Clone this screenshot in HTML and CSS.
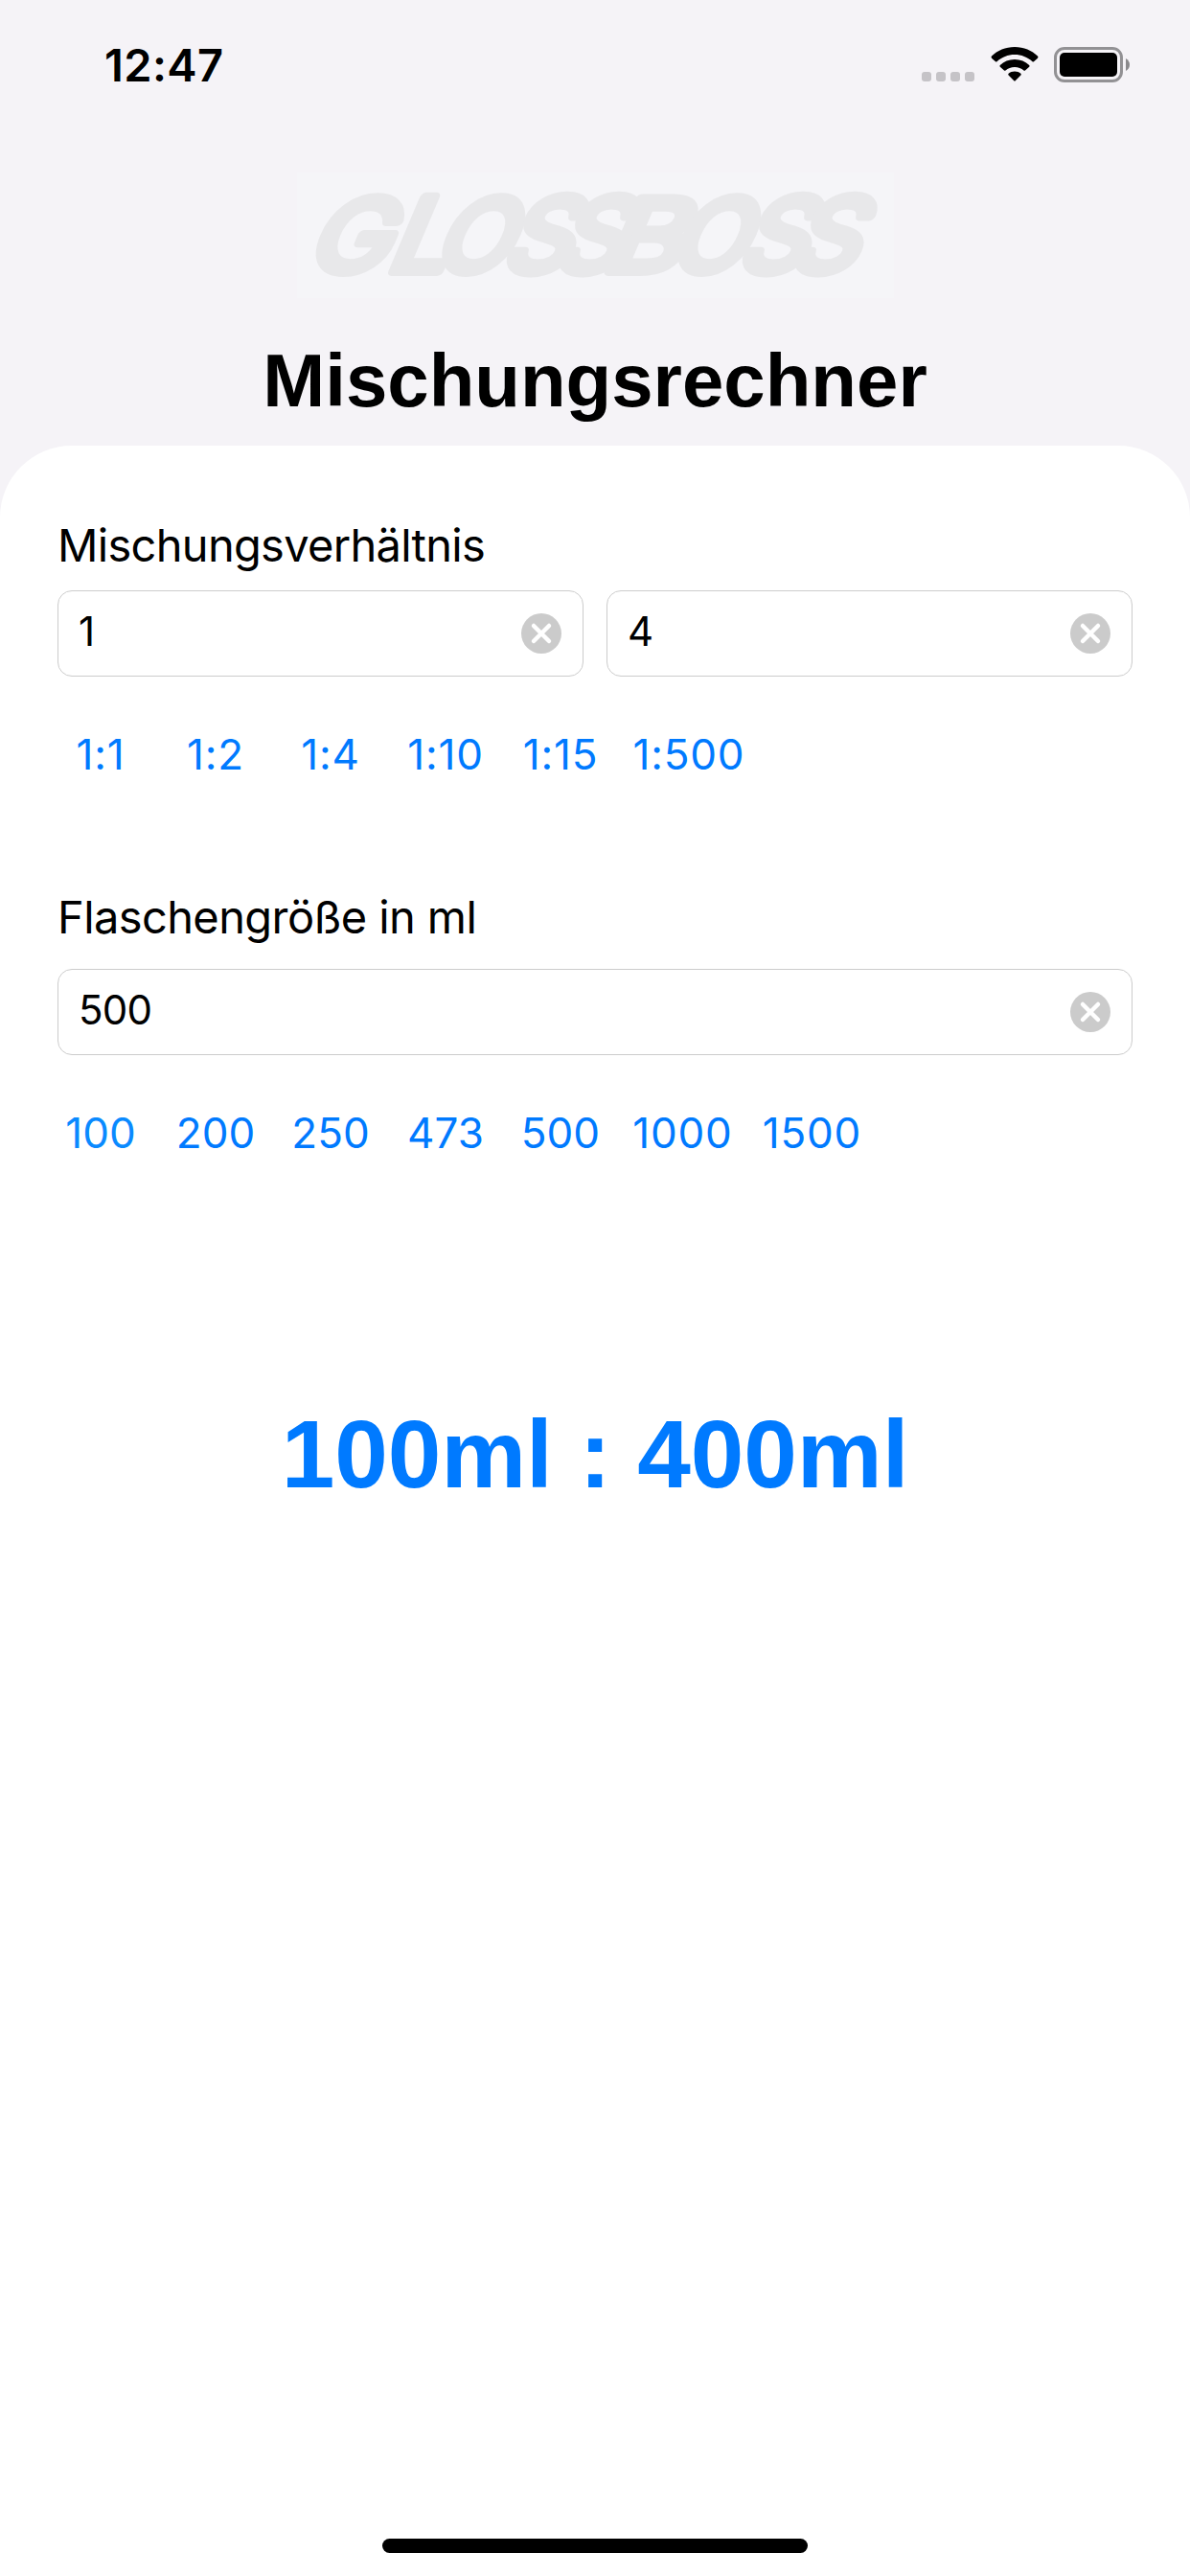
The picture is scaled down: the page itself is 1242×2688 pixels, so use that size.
FILE: index.html
```html
<!DOCTYPE html>
<html lang="de">
<head>
<meta charset="utf-8">
<title>Mischungsrechner</title>
<link rel="stylesheet" href="styles.css">
</head>
<body>
<header class="header">
  <div class="statusbar">
    <time class="clock">12:47</time>
    <div class="status-icons">
      <svg class="dots" viewBox="0 0 55 10"><rect width="10" height="10" rx="3"/><rect x="15" width="10" height="10" rx="3"/><rect x="30" width="10" height="10" rx="3"/><rect x="45" width="10" height="10" rx="3"/></svg>
      <svg class="wifi" viewBox="0 0 50 36"><path d="M25 0C34.600 0 43 3.700 49 9.500Q50 10.600 49 11.700L45 15.300Q44.300 15.900 43.500 15.200C38.500 10.700 32 8 25 8S11.500 10.700 6.500 15.200Q5.700 15.900 5 15.300L1 11.700Q0 10.600 1 9.500C7 3.700 15.400 0 25 0Z"/><path d="M25 13C31 13 36.300 15.200 40.200 18.900Q41 19.800 40.200 20.700L36 24.500Q35.300 25.200 34.500 24.500C32 22.300 28.700 21 25 21S18 22.300 15.500 24.500Q14.700 25.200 14 24.500L9.800 20.700Q9 19.800 9.800 18.900C13.700 15.200 19 13 25 13Z"/><path d="M25 25.500C27.500 25.500 29.700 26.300 31.400 27.700Q32.300 28.600 31.400 29.500L25.700 35.300Q25 36 24.300 35.300L18.600 29.500Q17.700 28.600 18.600 27.700C20.300 26.300 22.500 25.500 25 25.500Z"/></svg>
      <svg class="battery" viewBox="0 0 80 37"><rect x="1.500" y="1.500" width="69" height="34" rx="9.500" fill="none" stroke="#929194" stroke-width="3"/><rect x="6" y="6" width="60" height="25" rx="5"/><path d="M75 12Q79 14.500 79 18.500T75 25Z" fill="#8a898c"/></svg>
    </div>
  </div>
  <svg class="logo" viewBox="0 0 623 131" role="img" aria-label="Glossboss">
    <g transform="translate(0 103) skewX(-23)">
      <text transform="translate(7 0) scale(1.13 1.04)">G</text>
      <text transform="translate(91 0) scale(1.1 1.06)">L</text>
      <text transform="translate(139 0) scale(1.04 1.04)">O</text>
      <text transform="translate(211 0) scale(1.1 1.06)">S</text>
      <text transform="translate(265 0) scale(1.1 1.06)">S</text>
      <text transform="translate(316 0) scale(1.25 1.04)">B</text>
      <text transform="translate(385 0) scale(1.04 1.04)">O</text>
      <text transform="translate(457 0) scale(1.1 1.06)">S</text>
      <text transform="translate(511 0) scale(1.1 1.06)">S</text>
    </g>
  </svg>
  <h1 class="title">Mischungsrechner</h1>
</header>
<main class="card">
  <h2 class="label">Mischungsverhältnis</h2>
  <div class="fields">
    <div class="field"><span>1</span><svg class="clear" viewBox="0 0 42 42"><circle cx="21" cy="21" r="21"/><path d="M13 13L29 29M29 13L13 29"/></svg></div>
    <div class="field"><span>4</span><svg class="clear" viewBox="0 0 42 42"><circle cx="21" cy="21" r="21"/><path d="M13 13L29 29M29 13L13 29"/></svg></div>
  </div>
  <div class="presets ratios"><a>1:1</a><a>1:2</a><a>1:4</a><a>1:10</a><a>1:15</a><a class="wide">1:500</a></div>
  <h2 class="label size-label">Flaschengröße in ml</h2>
  <div class="fields size-fields">
    <div class="field"><span>500</span><svg class="clear" viewBox="0 0 42 42"><circle cx="21" cy="21" r="21"/><path d="M13 13L29 29M29 13L13 29"/></svg></div>
  </div>
  <div class="presets sizes"><a class="pressed">100</a><a>200</a><a>250</a><a>473</a><a>500</a><a class="wide">1000</a><a class="wide">1500</a></div>
  <p class="result">100ml : 400ml</p>
</main>
<div class="home-indicator"></div>
</body>
</html>
```
FILE: styles.css
```css
* { box-sizing: border-box; }
body { margin: 0; height: 2688px; display: flex; flex-direction: column; background: #f5f3f7; color: #000; font-family: Inter, "Liberation Sans", sans-serif; overflow: hidden; }
.header { height: 465px; display: flex; flex-direction: column; align-items: center; }
.statusbar { width: 100%; height: 180px; display: flex; justify-content: space-between; padding: 0 62px 0 109px; }
.clock { margin-top: 38px; height: 60px; font-size: 47px; line-height: 60px; font-weight: 600; letter-spacing: 0.4px; }
.status-icons { display: flex; height: 37px; margin-top: 49px; }
.dots { width: 55px; height: 10px; margin: 26px 17px 0 0; fill: #c5c3c7; }
.wifi { width: 50px; height: 36px; margin-right: 16px; }
.battery { width: 80px; height: 37px; }
.logo { width: 623px; height: 131px; background: #f5f5f8; overflow: visible; }
.logo text { font: 400 100px Inter, sans-serif; fill: #e8e8ea; stroke: #e8e8ea; stroke-width: 9.5px; stroke-linejoin: round; }
.title { margin: 41px 0 0; height: 90px; font: bold 78px/90px "Liberation Sans", Arial, sans-serif; white-space: nowrap; }
.card { flex: 1; padding: 71px 60px 0; background: #fff; border-radius: 75px 75px 0 0; }
.label { margin: 0; height: 66px; font-size: 47px; line-height: 66px; font-weight: 400; letter-spacing: -0.7px; }
.fields { display: flex; gap: 24px; margin-top: 14px; }
.field { flex: 1; height: 90px; display: flex; align-items: center; justify-content: space-between; padding: 0 22px 0 21px; border: 1px solid #ccc; border-radius: 15px; font-size: 42px; line-height: 50px; letter-spacing: -0.8px; }
.field span { margin-bottom: 4px; }
.clear { width: 42px; height: 42px; fill: #cbcbcb; }
.clear path { fill: none; stroke: #fff; stroke-width: 4.5px; stroke-linecap: round; }
.presets { display: flex; gap: 30px; height: 60px; margin-top: 51px; color: #007aff; font-size: 44px; line-height: 60px; }
.presets a { width: 90px; text-align: center; white-space: nowrap; }
.ratios a { letter-spacing: 0.8px; }
.presets .wide { width: 105px; letter-spacing: 0.8px; }
.ratios .wide { width: 118px; }
.presets .pressed { color: #0a8aff; }
.size-label { margin-top: 107px; letter-spacing: -0.6px; }
.size-fields { margin-top: 21px; }
.result { margin: 244px 0 0; height: 122px; text-align: center; color: #007aff; font: bold 100px/122px "Liberation Sans", Arial, sans-serif; letter-spacing: -0.1px; white-space: nowrap; }
.home-indicator { flex: none; width: 100%; height: 39px; background: #fff; }
.home-indicator::before { content: ""; display: block; width: 444px; height: 15px; margin: 0 auto; border-radius: 8px; background: #000; }
```
